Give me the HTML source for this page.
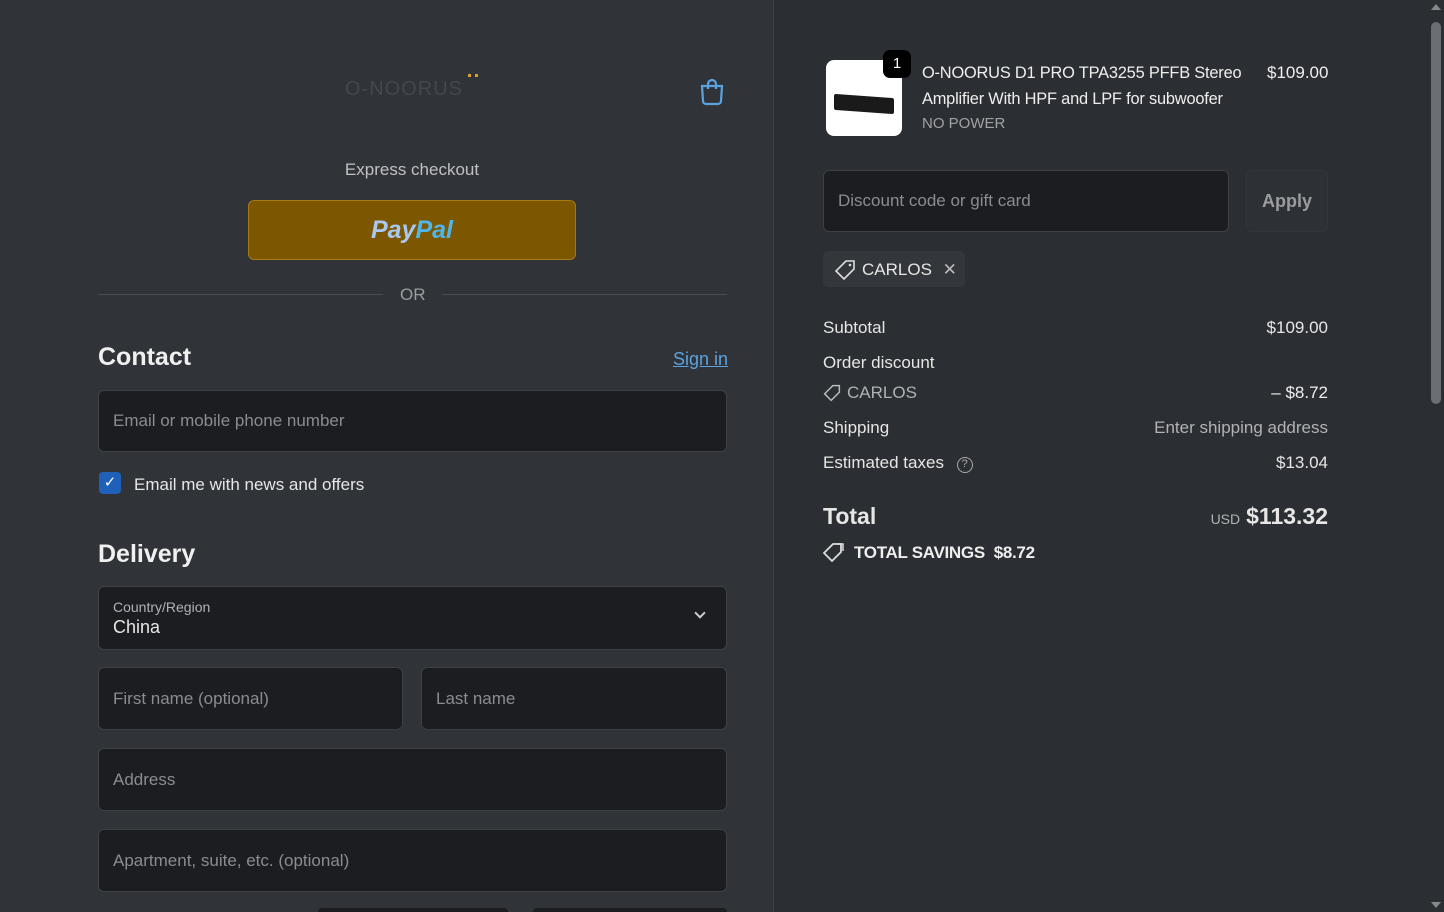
<!DOCTYPE html>
<html><head><meta charset="utf-8"><style>
*{box-sizing:border-box;margin:0;padding:0}
body{width:1444px;height:912px;overflow:hidden;background:#2b2e32;font-family:"Liberation Sans",sans-serif;color:#e6e6e6;position:relative}
.left{position:absolute;left:0;top:0;width:774px;height:912px;background:#303338;border-right:1px solid #3c3f44}
.abs{position:absolute}
.inp{position:absolute;background:#1c1d20;border:1px solid #3d4045;border-radius:6px;color:#8a8c90;font-size:17px;padding-left:14px;display:flex;align-items:center}
.row{position:absolute;left:823px;width:505px;font-size:17px;display:flex;justify-content:space-between}
.sb{position:absolute;right:0;top:0;width:16px;height:912px;background:#2b2e32}
</style></head><body>
<div class="left">
<div class="abs" style="left:345px;top:78px;font-size:20px;color:#44474c;letter-spacing:1px">O-NOORUS</div>
<div class="abs" style="left:468px;top:74px;width:10px;height:10px;border-top:3px dotted #d9a02a"></div>
<svg class="abs" style="left:698px;top:76px" width="28" height="30" viewBox="0 0 28 30"><path d="M4 10h20l-1 15a3 3 0 0 1-3 3H8a3 3 0 0 1-3-3z" fill="none" stroke="#5aa3e0" stroke-width="2.2"/><path d="M10 13V8a4 4 0 0 1 8 0v5" fill="none" stroke="#5aa3e0" stroke-width="2.2"/></svg>
<div class="abs" style="left:0;width:824px;top:160px;text-align:center;font-size:17px;color:#bfc0c2">Express checkout</div>
<div class="abs" style="left:248px;top:200px;width:328px;height:60px;background:#7d5700;border:1px solid #a57a10;border-radius:6px;text-align:center;line-height:58px;font-size:25px;font-weight:bold;font-style:italic"><span style="color:#a9c7f0">Pay</span><span style="color:#4fb6ea">Pal</span></div>
<div class="abs" style="left:98px;top:294px;width:285px;height:1px;background:#4a4d52"></div>
<div class="abs" style="left:442px;top:294px;width:285px;height:1px;background:#4a4d52"></div>
<div class="abs" style="left:400px;top:285px;font-size:17px;color:#9a9c9f">OR</div>
<div class="abs" style="left:98px;top:343px;font-size:25px;font-weight:bold;color:#f0f0f0">Contact</div>
<div class="abs" style="left:673px;top:349px;font-size:18px;color:#5aa3e0;text-decoration:underline">Sign in</div>
<div class="inp" style="left:98px;top:390px;width:629px;height:62px">Email or mobile phone number</div>
<div class="abs" style="left:99px;top:472px;width:22px;height:22px;background:#1f60b8;border-radius:4px;color:#fff;font-size:15px;text-align:center;line-height:22px">✓</div>
<div class="abs" style="left:134px;top:475px;font-size:17px;color:#e6e6e6">Email me with news and offers</div>
<div class="abs" style="left:98px;top:540px;font-size:25px;font-weight:bold;color:#f0f0f0">Delivery</div>
<div class="inp" style="left:98px;top:586px;width:629px;height:64px;display:block;padding-top:12px">
<div style="font-size:14px;color:#b0b2b5">Country/Region</div><div style="font-size:18px;color:#e6e6e6;margin-top:2px">China</div>
<div style="position:absolute;right:22px;top:22px;width:8px;height:8px;border-right:2px solid #ccc;border-bottom:2px solid #ccc;transform:rotate(45deg)"></div></div>
<div class="inp" style="left:98px;top:667px;width:305px;height:63px">First name (optional)</div>
<div class="inp" style="left:421px;top:667px;width:306px;height:63px">Last name</div>
<div class="inp" style="left:98px;top:748px;width:629px;height:63px">Address</div>
<div class="inp" style="left:98px;top:829px;width:629px;height:63px">Apartment, suite, etc. (optional)</div>
<div class="abs" style="left:318px;top:908px;width:190px;height:4px;background:#1c1d20;border-radius:4px 4px 0 0"></div>
<div class="abs" style="left:533px;top:908px;width:194px;height:4px;background:#1c1d20;border-radius:4px 4px 0 0"></div>
</div>
<div class="abs" style="left:826px;top:60px;width:76px;height:76px;background:#fff;border-radius:8px"><div style="position:absolute;left:8px;top:36px;width:60px;height:16px;background:#1a1a1a;border-radius:2px;transform:skewY(4deg)"></div></div>
<div class="abs" style="left:883px;top:50px;width:28px;height:28px;background:#000;border-radius:7px;color:#fff;font-size:15px;text-align:center;line-height:28px">1</div>
<div class="abs" style="left:922px;top:60px;font-size:16.4px;line-height:26px;color:#eee;letter-spacing:-0.2px">O-NOORUS D1 PRO TPA3255 PFFB Stereo<br>Amplifier With HPF and LPF for subwoofer</div>
<div class="abs" style="left:922px;top:115px;font-size:15px;color:#a0a2a5">NO POWER</div>
<div class="abs" style="left:1267px;top:63px;font-size:17px;color:#eee">$109.00</div>
<div class="inp" style="left:823px;top:170px;width:406px;height:62px">Discount code or gift card</div>
<div class="abs" style="left:1246px;top:170px;width:82px;height:62px;border:1px solid #33363a;border-radius:6px;background:#2d3034;color:#9a9c9f;font-weight:bold;font-size:18px;text-align:center;line-height:60px">Apply</div>
<div class="abs" style="left:823px;top:251px;width:142px;height:36px;background:#33363a;border-radius:5px;font-size:17px;line-height:37px;padding-left:39px;color:#e6e6e6">CARLOS <span style="margin-left:6px;color:#bbb">✕</span></div>
<svg class="abs" style="left:834px;top:259px" width="22" height="22" viewBox="0 0 22 22"><path d="M12 2h8v8L10 20 2 12z" fill="none" stroke="#ddd" stroke-width="1.6"/><circle cx="16" cy="6" r="1.3" fill="#ddd"/></svg>
<div class="row" style="top:318px"><span>Subtotal</span><span>$109.00</span></div>
<div class="row" style="top:353px"><span>Order discount</span></div>
<div class="row" style="top:383px;color:#b0b2b5"><span style="padding-left:24px">CARLOS</span><span style="color:#eee">– $8.72</span></div>
<svg class="abs" style="left:823px;top:384px" width="18" height="18" viewBox="0 0 22 22"><path d="M12 2h8v8L10 20 2 12z" fill="none" stroke="#bbb" stroke-width="1.8"/></svg>
<div class="row" style="top:418px"><span>Shipping</span><span style="color:#b0b2b5">Enter shipping address</span></div>
<div class="row" style="top:453px"><span>Estimated taxes <span style="display:inline-block;width:16px;height:16px;border:1.5px solid #aaa;border-radius:50%;font-size:11px;text-align:center;line-height:13px;margin-left:8px;color:#aaa;vertical-align:1px">?</span></span><span>$13.04</span></div>
<div class="row" style="top:503px;align-items:baseline"><span style="font-size:23px;font-weight:bold">Total</span><span><span style="font-size:14px;color:#b0b2b5;margin-right:6px">USD</span><span style="font-size:23px;font-weight:bold">$113.32</span></span></div>
<svg class="abs" style="left:823px;top:542px" width="22" height="20" viewBox="0 0 22 20"><path d="M10 2h8v8L9 19 1 11z" fill="none" stroke="#ddd" stroke-width="1.8"/><path d="M14 2l6 0 0 7" fill="none" stroke="#ddd" stroke-width="1.5"/></svg>
<div class="abs" style="left:854px;top:543px;font-size:17px;font-weight:bold;color:#eee;letter-spacing:-0.3px">TOTAL SAVINGS&nbsp; $8.72</div>
<div class="sb"><div style="position:absolute;left:3px;top:22px;width:10px;height:382px;background:#6b6e72;border-radius:5px"></div>
<div style="position:absolute;left:3px;top:4px;border:5px solid transparent;border-bottom:6px solid #888;border-top:0"></div>
<div style="position:absolute;left:3px;bottom:4px;border:5px solid transparent;border-top:6px solid #888;border-bottom:0"></div></div>
</body></html>
